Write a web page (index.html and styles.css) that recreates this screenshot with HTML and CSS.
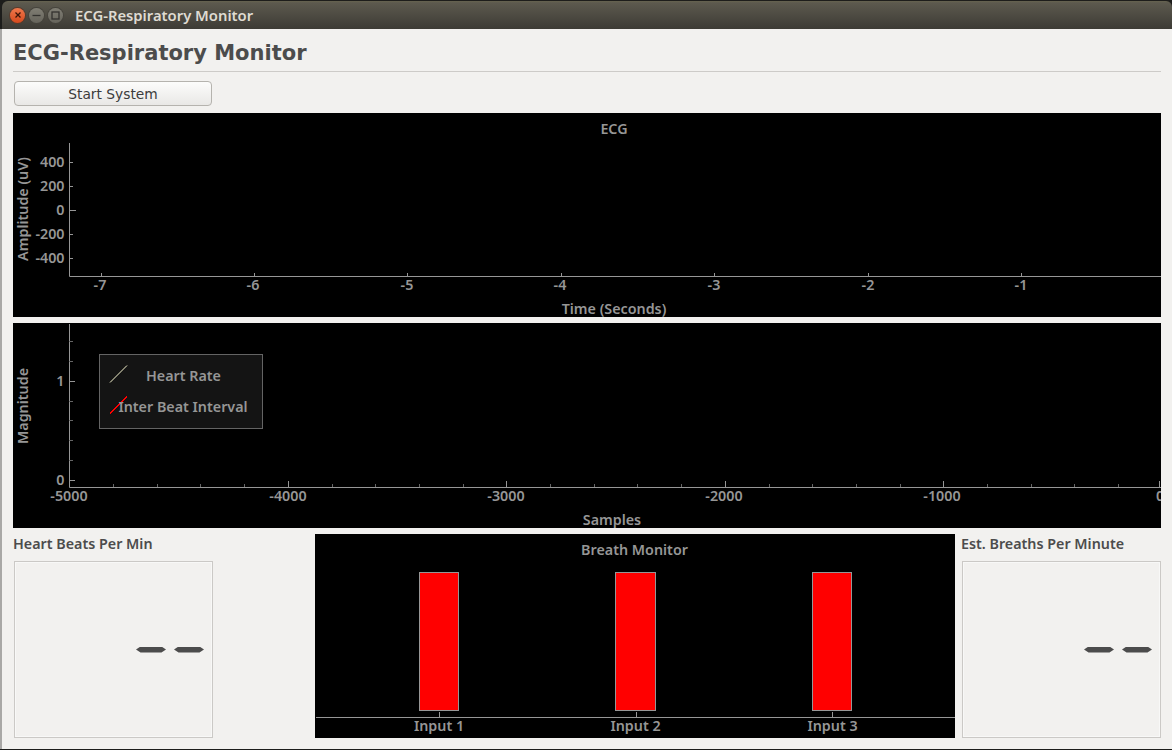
FILE: index.html
```html
<!DOCTYPE html>
<html lang="en">
<head>
  <meta charset="UTF-8">
  <title>ECG-Respiratory Monitor</title>
  <link rel="stylesheet" href="styles.css">
</head>
<body>
  <div class="window">
    <div class="titlebar">
      <div class="controls">
        <span class="ctl ctl-close">
          <svg width="8" height="8" viewBox="0 0 8 8"><path d="M1.500 1.500l5 5M6.500 1.500l-5 5" stroke="#3a1408" stroke-width="1.300"/></svg>
        </span>
        <span class="ctl">
          <svg width="9" height="9" viewBox="0 0 9 9"><path d="M0.500 4.500h8" stroke="#33322e" stroke-width="1.300"/></svg>
        </span>
        <span class="ctl">
          <svg width="9" height="9" viewBox="0 0 9 9"><rect x="1" y="1" width="7" height="7" fill="none" stroke="#33322e" stroke-width="1.300"/></svg>
        </span>
      </div>
      <span class="title-text">ECG-Respiratory Monitor</span>
    </div>

    <main class="content">
      <h1>ECG-Respiratory Monitor</h1>
      <hr class="rule">
      <button class="start-btn">Start System</button>

      <svg class="plot plot-ecg" width="1148" height="204" viewBox="0 0 1148 204">
        <text class="plot-title" x="601" y="21" text-anchor="middle">ECG</text>
        <text class="axis-label" transform="translate(14.500 96) rotate(-90)" text-anchor="middle">Amplitude (uV)</text>
        <path class="axis" d="M56.500 30V163.500H1148"/>
        <path class="axis" d="M56 49.500H60M56 73.500H60M56 97.500H63M56 121.500H60M56 145.500H60"/>
        <path class="axis" d="M88.500 163V160M241.500 163V160M394.500 163V160M548.500 163V160M701.500 163V160M855.500 163V160M1008.500 163V160"/>
        <g class="tick" text-anchor="end">
          <text x="51.500" y="54">400</text>
          <text x="51.500" y="78">200</text>
          <text x="51.500" y="102">0</text>
          <text x="51.500" y="126">-200</text>
          <text x="51.500" y="150">-400</text>
        </g>
        <g class="tick" text-anchor="middle">
          <text x="87" y="177">-7</text>
          <text x="240" y="177">-6</text>
          <text x="394" y="177">-5</text>
          <text x="547" y="177">-4</text>
          <text x="701" y="177">-3</text>
          <text x="855" y="177">-2</text>
          <text x="1008" y="177">-1</text>
        </g>
        <text class="axis-label" x="601" y="201" text-anchor="middle">Time (Seconds)</text>
      </svg>

      <svg class="plot plot-rate" width="1148" height="205" viewBox="0 0 1148 205">
        <text class="axis-label" transform="translate(14.500 83) rotate(-90)" text-anchor="middle">Magnitude</text>
        <path class="axis" d="M56.500 1V164.500H1148"/>
        <path class="axis" d="M56 58.500H62M56 157.500H62"/>
        <path class="axis minor" d="M56 18.500H60M56 38.500H60M56 78.500H60M56 97.500H60M56 117.500H60M56 137.500H60"/>
        <path class="axis" d="M275.500 164V158M493.500 164V158M712.500 164V158M930.500 164V158M1146.500 164V158"/>
        <path class="axis minor" d="M100.500 164V161M144.500 164V161M187.500 164V161M231.500 164V161M319.500 164V161M362.500 164V161M406.500 164V161M450.500 164V161M537.500 164V161M581.500 164V161M624.500 164V161M668.500 164V161M756.500 164V161M799.500 164V161M843.500 164V161M887.500 164V161M974.500 164V161M1018.500 164V161M1061.500 164V161M1105.500 164V161"/>
        <g class="tick" text-anchor="end">
          <text x="51.500" y="63">1</text>
          <text x="51.500" y="162">0</text>
        </g>
        <g class="tick" text-anchor="middle">
          <text x="56" y="178">-5000</text>
          <text x="275" y="178">-4000</text>
          <text x="493" y="178">-3000</text>
          <text x="711" y="178">-2000</text>
          <text x="929" y="178">-1000</text>
          <text x="1147" y="178">0</text>
        </g>
        <text class="axis-label" x="599" y="202" text-anchor="middle">Samples</text>
        <rect class="legend" x="86.500" y="31.500" width="163" height="74"/>
        <path class="legend-line" d="M97 59.500L114 42.500" stroke="#f4f2cc"/>
        <path class="legend-line line-red" d="M97 90.500L114 73.500" stroke="#ff0000"/>
        <text class="legend-text" x="170.500" y="58" text-anchor="middle">Heart Rate</text>
        <text class="legend-text" x="170" y="89" text-anchor="middle">Inter Beat Interval</text>
      </svg>

      <section class="bottom-row">
        <div class="gauge-col">
          <h2>Heart Beats Per Min</h2>
          <div class="lcd">
            <span class="dash"></span><span class="dash"></span>
          </div>
        </div>

        <svg class="plot plot-breath" width="640" height="204" viewBox="0 0 640 204">
          <text class="plot-title" x="319.500" y="21" text-anchor="middle">Breath Monitor</text>
          <path class="axis" d="M1 183.500H640"/>
          <path class="axis" d="M124.500 183V178M321.500 183V178M517.500 183V178"/>
          <rect class="bar" x="104.500" y="38.500" width="39" height="138"/>
          <rect class="bar" x="300.500" y="38.500" width="40" height="138"/>
          <rect class="bar" x="497.500" y="38.500" width="39" height="138"/>
          <g class="tick" text-anchor="middle">
            <text x="124" y="197">Input 1</text>
            <text x="320.500" y="197">Input 2</text>
            <text x="517.500" y="197">Input 3</text>
          </g>
        </svg>

        <div class="gauge-col gauge-right">
          <h2>Est. Breaths Per Minute</h2>
          <div class="lcd">
            <span class="dash"></span><span class="dash"></span>
          </div>
        </div>
      </section>
    </main>
  </div>
</body>
</html>
```

FILE: styles.css
```css
html, body {
  margin: 0;
  padding: 0;
  height: 100%;
  background-color: #1d1d1b;
  overflow: hidden;
}

.window {
  margin-top: 1px;
  height: 748px;
  display: flex;
  flex-direction: column;
}

.titlebar {
  height: 28px;
  flex: none;
  margin-left: 2px;
  display: flex;
  align-items: center;
  border-radius: 6px 6px 0 0;
  background: linear-gradient(#66634f 0, #5c594e 2px, #3d3b35 100%);
  color: #dfdbd2;
}

.controls {
  display: flex;
  gap: 4px;
  margin-left: 8px;
}

.ctl {
  width: 15px;
  height: 15px;
  border-radius: 50%;
  display: flex;
  align-items: center;
  justify-content: center;
  background: linear-gradient(#807e74, #66645b);
  box-shadow: 0 0 0 1px #45433c;
}

.ctl-close {
  background: linear-gradient(#f0784c, #d6491c);
  box-shadow: 0 0 0 1px #5a3a2a;
}

.title-text {
  margin-left: 12px;
  font-family: "Noto Sans", sans-serif;
  font-size: 14.800px;
  font-weight: 600;
}

.content {
  flex: 1;
  padding: 10px 11px 0 11px;
  display: flex;
  flex-direction: column;
  border-left: 2px solid #a9a8a6;
  background-color: #f2f1ef;
  font-family: "Noto Sans", sans-serif;
}

h1 {
  margin: 0;
  font-family: "DejaVu Sans", sans-serif;
  font-size: 21px;
  line-height: 28px;
  font-weight: 700;
  color: #4c4c4c;
}

.rule {
  width: 100%;
  margin: 4px 0 0 0;
  border: none;
  border-top: 1px solid #cdcbc8;
}

.start-btn {
  width: 198px;
  height: 25px;
  margin: 9px 0 7px 1px;
  padding: 0;
  font-family: "DejaVu Sans", sans-serif;
  font-size: 13.800px;
  color: #3c3c3c;
  border: 1px solid #b5b3ae;
  border-radius: 4px;
  background: linear-gradient(#fcfcfb, #e9e8e6);
}

.plot {
  display: block;
  background-color: #000;
  flex: none;
}

.plot-rate {
  margin-top: 6px;
}

.axis {
  stroke: #969696;
  fill: none;
}

.axis.minor {
  stroke: #666;
}

.plot text {
  font-family: "Noto Sans", sans-serif;
  font-size: 14.300px;
  font-weight: 600;
  fill: #969696;
}

.legend {
  fill: #141414;
  stroke: #646464;
}

.legend-line {
  fill: none;
  stroke-width: 1;
}

.line-red {
  shape-rendering: crispEdges;
}

.bar {
  fill: #ff0000;
  stroke: #969696;
}

.bottom-row {
  margin-top: 6px;
  display: flex;
  align-items: flex-start;
}

.gauge-col {
  width: 302px;
  flex: none;
}

.gauge-right {
  width: 200px;
  margin-left: 6px;
}

h2 {
  margin: 0;
  padding-top: 1px;
  font-size: 14.300px;
  line-height: 18px;
  font-weight: 600;
  color: #4c4c4c;
  white-space: nowrap;
}

.lcd {
  width: 189px;
  height: 175px;
  margin: 8px 0 0 1px;
  padding-right: 8px;
  border: 1px solid #cbc9c6;
  box-shadow: inset 0 0 0 1px #f8f8f7;
  display: flex;
  align-items: center;
  justify-content: flex-end;
  gap: 8px;
}

.dash {
  width: 30px;
  height: 6px;
  background-color: #4c4c4c;
  clip-path: polygon(0 50%, 15% 0, 85% 0, 100% 50%, 85% 100%, 15% 100%);
}
```
